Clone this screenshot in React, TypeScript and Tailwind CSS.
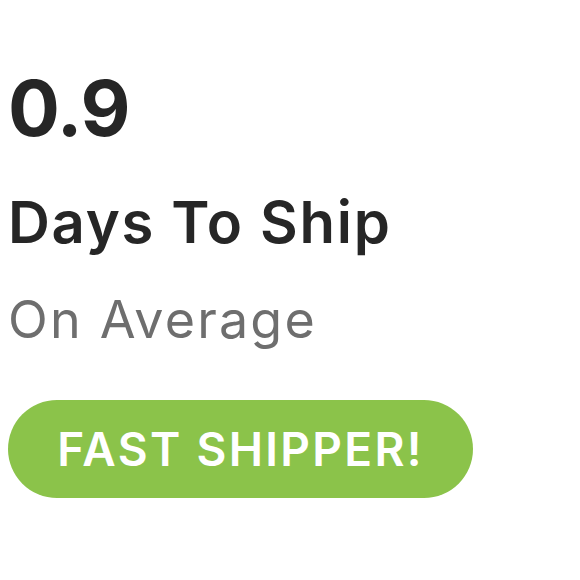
export default function App() {
  return (
    <div className="w-[580px] h-[580px] bg-white pl-[8px] pt-[64px] font-['Inter',sans-serif]">
      <div className="text-[77px] leading-[88px] font-bold text-[#262626] tracking-[-1px]">0.9</div>
      <div className="mt-[38px] text-[58px] leading-[64px] font-semibold text-[#262626] tracking-[1.7px]">Days To Ship</div>
      <div className="mt-[36px] text-[52px] leading-[60px] text-[#6e6e6e] tracking-[2.2px]">On Average</div>
      <div className="mt-[50px] w-[465px] h-[98px] rounded-full bg-[#8bc34a] flex items-center justify-center">
        <span className="text-[46px] font-semibold text-white tracking-[2.3px]">FAST SHIPPER!</span>
      </div>
    </div>
  );
}
